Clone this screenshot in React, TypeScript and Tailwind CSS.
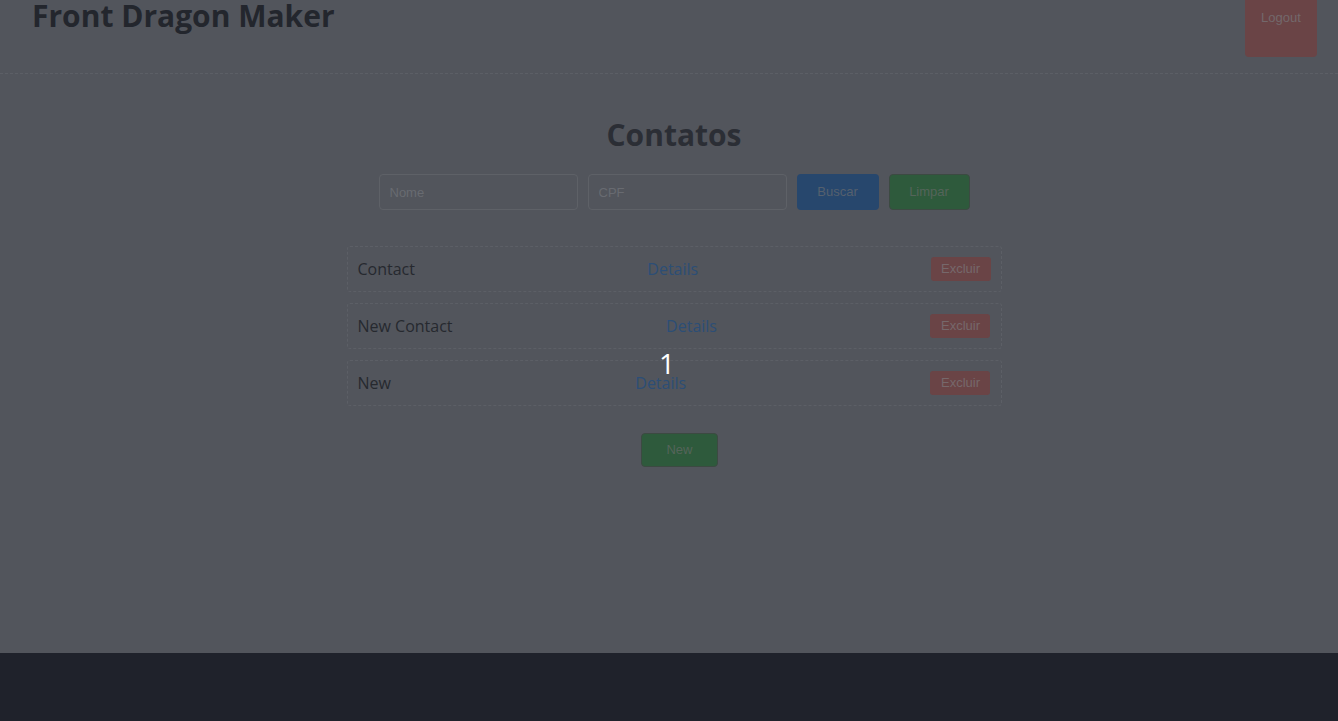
const contacts = ["Contact", "New Contact", "New"];

export default function App() {
  return (
    <div className="flex min-h-[721px] flex-col bg-[#52555c] font-['Open_Sans',sans-serif]">
      <header className="flex h-[74px] items-start justify-between border-b border-dashed border-[#5c5f66] pl-8 pr-[21px]">
        <h1 className="text-[30px] font-bold leading-[32px] text-[#23262d]">Front Dragon Maker</h1>
        <button className="h-[57px] w-[72px] rounded-b-[4px] bg-[#6a4446] pb-[22px] font-['Liberation_Sans',sans-serif] text-[13px] text-[#73686b]">
          Logout
        </button>
      </header>

      <main className="flex flex-1 flex-col items-center pl-[10px]">
        <h2 className="mt-[39px] text-[30px] font-bold leading-[44px] text-[#2b2e35]">Contatos</h2>

        <div className="mt-[17px] flex gap-[10px] font-['Liberation_Sans',sans-serif] text-[13px]">
          <input
            placeholder="Nome"
            className="h-[36px] w-[199px] rounded-[4px] border border-[#5e6167] bg-transparent px-[10px] placeholder:text-[#686b71]"
          />
          <input
            placeholder="CPF"
            className="h-[36px] w-[199px] rounded-[4px] border border-[#5e6167] bg-transparent px-[10px] placeholder:text-[#686b71]"
          />
          <button className="h-[36px] w-[82px] rounded-[4px] bg-[#27476d] text-[#55606e]">Buscar</button>
          <button className="h-[36px] w-[81px] rounded-[4px] border border-[#3c4a42] bg-[#2e5a3c] text-[#55645a]">
            Limpar
          </button>
        </div>

        <ul className="mt-[36px] flex w-[655px] flex-col gap-[11px]">
          {contacts.map((name) => (
            <li
              key={name}
              className="flex h-[46px] items-center justify-between rounded-[3px] border border-dashed border-[#5c5f66] px-[10px]"
            >
              <span className="text-[16px] text-[#26292f]">{name}</span>
              <a className="text-[16px] text-[#2c4e76]">Details</a>
              <button className="h-[24px] w-[60px] rounded-[3px] bg-[#6a4446] font-['Liberation_Sans',sans-serif] text-[13px] text-[#76686b]">
                Excluir
              </button>
            </li>
          ))}
        </ul>

        <button className="ml-[11px] mt-[27px] h-[34px] w-[77px] rounded-[4px] border border-[#3c4a42] bg-[#2e5a3c] font-['Liberation_Sans',sans-serif] text-[13px] text-[#55645a]">
          New
        </button>
      </main>

      <footer className="h-[68px] bg-[#1f222b]" />

      <div className="pointer-events-none absolute left-[659px] top-[342px] text-[28px] text-white">1</div>
    </div>
  );
}
